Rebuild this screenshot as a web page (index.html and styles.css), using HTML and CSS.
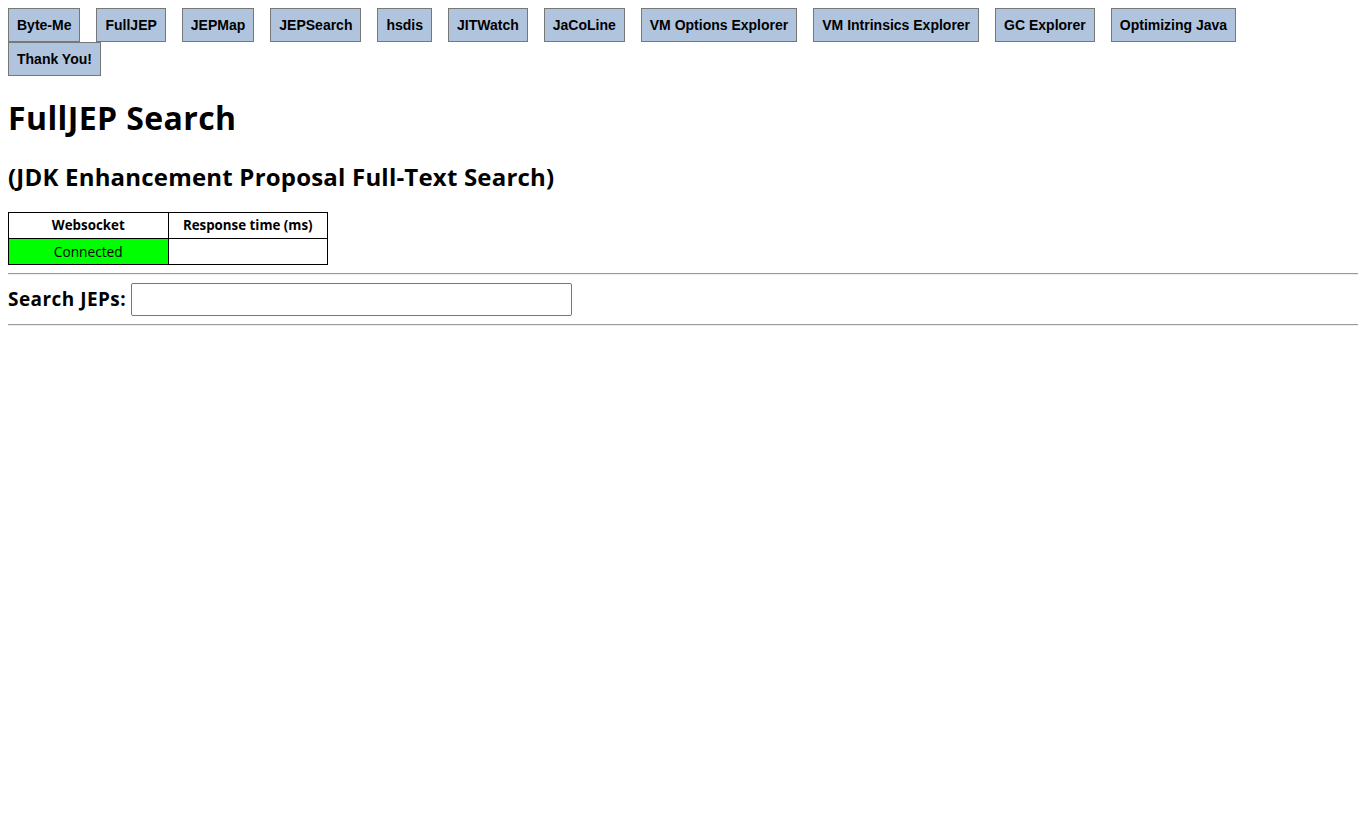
FILE: index.html
```html
<!DOCTYPE html>
<html lang="en">
<head>
  <meta charset="UTF-8" />
  <title>FullJEP Search</title>
  <link rel="stylesheet" href="styles.css">
</head>
<body>

  <!-- Site navigation -->
  <nav class="sites">
    <button class="site">Byte-Me</button>
    <button class="site">FullJEP</button>
    <button class="site">JEPMap</button>
    <button class="site">JEPSearch</button>
    <button class="site">hsdis</button>
    <button class="site">JITWatch</button>
    <button class="site">JaCoLine</button>
    <button class="site">VM Options Explorer</button>
    <button class="site">VM Intrinsics Explorer</button>
    <button class="site">GC Explorer</button>
    <button class="site">Optimizing Java</button>
    <button class="site">Thank You!</button>
  </nav>

  <h1>FullJEP Search</h1>
  <h2>(JDK Enhancement Proposal Full-Text Search)</h2>

  <table class="status">
    <tr>
      <th>Websocket</th>
      <th>Response time (ms)</th>
    </tr>
    <tr>
      <td class="connected">Connected</td>
      <td></td>
    </tr>
  </table>

  <hr>
  <div class="search">
    <label for="query">Search JEPs:</label>
    <input type="text" id="query">
  </div>
  <hr>

</body>
</html>
```

FILE: styles.css
```css
body {
  font-family: 'Open Sans', 'Noto Sans', sans-serif;
  line-height: 1.33;
  margin: 8px;
  color: #000;
}

/* === NAV BUTTONS === */
.sites {
  display: flex;
  flex-wrap: wrap;
}

.site {
  font-family: 'Liberation Sans', Arial, sans-serif;
  font-size: 14px;
  font-weight: bold;
  background: #b0c4de;
  color: #000;
  border: 1px solid #777;
  padding: 8px 8px;
  margin: 0 16px 0 0;
  height: 34px;
  line-height: 16px;
}

h1 {
  font-size: 32px;
  margin: 21.44px 0;
  letter-spacing: 0.4px;
}

h2 {
  font-size: 24px;
  margin: 19.92px 0 19px;
  letter-spacing: 0.2px;
}

/* === STATUS TABLE === */
.status {
  border-collapse: collapse;
  width: 320px;
  font-size: 13.33px;
}

.status th,
.status td {
  border: 1px solid #000;
  width: 50%;
  height: 25px;
  padding: 0 2px;
  text-align: center;
}

.status td {
  font-size: 13.7px;
}

.status .connected {
  background: #00ff00;
}

hr {
  margin: 8px 0;
  border: 0;
  border-top: 1px solid #999;
  border-bottom: 1px solid #eee;
}

/* === SEARCH ROW === */
.search {
  display: flex;
  align-items: center;
}

.search label {
  font-size: 19px;
  font-weight: bold;
  margin-right: 5px;
  letter-spacing: 0.45px;
}

.search input {
  width: 441px;
  height: 33px;
  box-sizing: border-box;
  border: 1px solid #767676;
  border-radius: 2px;
  font-size: 16px;
}
```
